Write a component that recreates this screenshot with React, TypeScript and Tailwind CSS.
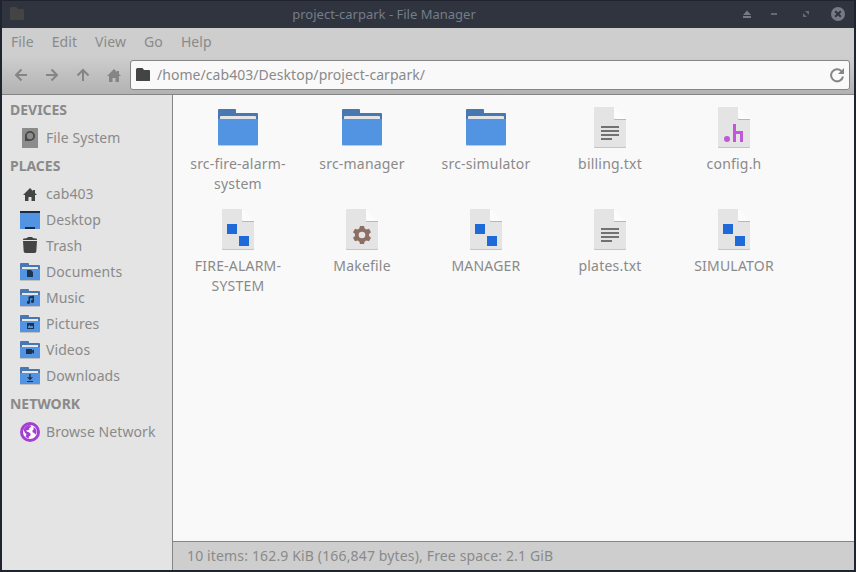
import React from "react";

type SidebarIconName = "disk" | "home" | "desktop" | "trash" | "documents" | "music" | "pictures" | "videos" | "downloads" | "network";
type FileKind = "folder" | "text" | "header" | "make" | "binary";

const HOME = "M7 0L0 7H2V13H5.5V9H8.5V13H12V7H14L12 5V2H10V3Z";
const FOLDER = "M0 1.5Q0 0 1.5 0H6.5L8 2H13Q14 2 14 3V12.5Q14 13 13 13H1Q0 13 0 12.5Z";

function Emblem({ name }: { name: SidebarIconName }) {
  switch (name) {
    case "documents":
      return <path d="M7 7h4l2 2v5H7z" fill="#1b3550" />;
    case "music":
      return <path d="M8.5 7.4L14 6.4v6a1.6 1.6 0 1 1-1.5-1.6V8.900L10 9.400v4a1.6 1.6 0 1 1-1.5-1.6z" fill="#1b3550" />;
    case "pictures":
      return <path fillRule="evenodd" d="M7 8h7v6H7zM8 13h5v-1.5l-1.2-1-1 1L9.500 10 8 11.600z" fill="#1b3550" />;
    case "videos":
      return <path d="M6 8h6v1.500L14 8.500v4.500l-2-1.500V13H6z" fill="#1b3550" />;
    default:
      return <path d="M9.300 7h1.400v3.200H13L10 13.200l-3-3h2.300zM7 14h6v1H7z" fill="#1b3550" />;
  }
}

function SidebarIcon({ name }: { name: SidebarIconName }) {
  return (
    <svg width="20" height="20" viewBox="0 0 20 20" className="shrink-0">
      {name === "disk" && (
        <>
          <rect x="2" y="0" width="16" height="20" rx=".6" fill="#8c8c8c" />
          <path fillRule="evenodd" d="M5 13V8a5 5 0 1 1 5 5zM10 4.8a3.2 3.2 0 1 0 0 6.4 3.2 3.2 0 0 0 0-6.4z" fill="#484848" />
        </>
      )}
      {name === "home" && <path d={HOME} transform="translate(3 4)" fill="#444" />}
      {name === "desktop" && (
        <>
          <path d="M0 1h20v18H0z" fill="#5294e2" />
          <path d="M0 1h20v2H0zM5 17h10v2H5z" fill="#1b2b45" />
        </>
      )}
      {name === "trash" && (
        <path d="M3 3.4Q3 2.5 4 2.4L7.5 2V1h5v1l3.5.4q1 .1 1 1V4H3zM3 5h14l-.7 10.500Q16 17 14 17H6q-2 0-2.300-1.500z" fill="#444" />
      )}
      {["documents", "music", "pictures", "videos", "downloads"].includes(name) && (
        <>
          <path d="M0 2q0-1 1-1h7q1 0 1 1v1h10q1 0 1 1v4H0z" fill="#4877b1" />
          <path d="M2 5h16v3H2z" fill="#e8e8e8" />
          <rect y="7" width="20" height="12" rx=".8" fill="#c0c0c0" />
          <path d="M0 7h20v10.5q0 .5-.7.5H.7q-.7 0-.7-.5z" fill="#5294e2" />
          <g transform="translate(0 1)"><Emblem name={name} /></g>
        </>
      )}
      {name === "network" && (
        <>
          <circle cx="10" cy="10" r="10" fill="#a33fd1" />
          <circle cx="10" cy="10" r="7" fill="#fff" />
          <path d="M8.500 3l2.500.5-.3 1.700-1.700 1 .5 1.300-1.700.8-1.300-.2.2 1.400 2.300.8 1.800 1.700-.5 1.700-1.500 1 .2 1.800Q7 16 5.500 14.500L6.500 12.500 4.500 10 3.500 7.500Q5 4 8.500 3zM13.500 5l1.700 1.200q1.500 1.800 1.300 4.200l-1.200 2.400-1-1.800-1.500-.5-.5-1.800 1.300-1.200z" fill="#a33fd1" />
        </>
      )}
    </svg>
  );
}

function FileIcon({ kind }: { kind: FileKind }) {
  if (kind === "folder") {
    return (
      <svg width="48" height="48" viewBox="0 0 48 48">
        <path d="M4 6q0-1 1-1h16q1 0 1 1v3h21q1 0 1 1v8H4z" fill="#4877b1" />
        <path d="M6 16v-3q0-1 1-1h34q1 0 1 1v3z" fill="#e4e4e4" />
        <path d="M4 20h40v21q0 1-1 1H5q-1 0-1-1z" fill="#c4c8cf" />
        <path d="M4 15.500q0-.5 1-.5h38q1 0 1 .5v24.700q0 .8-1 .8H5q-1 0-1-.8z" fill="#5294e2" />
      </svg>
    );
  }
  return (
    <svg width="48" height="48" viewBox="0 0 48 48">
      <path d="M8 40h32v3q0 1-1 1H9q-1 0-1-1z" fill="#c4c4c4" />
      <path d="M8 4q0-1 1-1h19v12h12v27q0 1-1 1H9q-1 0-1-1z" fill="#e4e4e4" />
      <path d="M28 3l12 12H29q-1 0-1-1z" fill="#fcfcfc" />
      <path d="M28 14q0 1 1 1h11v1H29q-1 0-1-1z" fill="#b7b7b7" />
      {kind === "text" && <path d="M15 22h18v2H15zM15 26h18v2H15zM15 30h18v2H15zM15 34h11v2H15z" fill="#727272" />}
      {kind === "binary" && <path d="M13 18h10v10H13zM25 30h10v10H25z" fill="#1e6ad9" />}
      {kind === "header" && (
        <>
          <circle cx="17" cy="35" r="3" fill="#c355d9" />
          <path d="M23 20h3v7h7v11h-3v-8h-4v8h-3z" fill="#c355d9" />
        </>
      )}
      {kind === "make" && (
        <g transform="translate(24 29)">
          <path d="M-2-9h4l.7 2.6 1.7 1 2.6-.8 2 3.5-2 1.8v1.9l2 1.8-2 3.5-2.6-.8-1.7 1L2 9h-4l-.7-2.5-1.7-1-2.6.8-2-3.5 2-1.8v-1.9l-2-1.8 2-3.5 2.6.8 1.7-1z" fill="#8d6e63" />
          <circle r="3.3" fill="#e4e4e4" />
        </g>
      )}
    </svg>
  );
}

const groups: { title: string; items: [string, SidebarIconName][] }[] = [
  { title: "DEVICES", items: [["File System", "disk"]] },
  {
    title: "PLACES",
    items: [
      ["cab403", "home"], ["Desktop", "desktop"], ["Trash", "trash"], ["Documents", "documents"],
      ["Music", "music"], ["Pictures", "pictures"], ["Videos", "videos"], ["Downloads", "downloads"],
    ],
  },
  { title: "NETWORK", items: [["Browse Network", "network"]] },
];

const files: { lines: string[]; kind: FileKind }[] = [
  { lines: ["src-fire-alarm-", "system"], kind: "folder" },
  { lines: ["src-manager"], kind: "folder" },
  { lines: ["src-simulator"], kind: "folder" },
  { lines: ["billing.txt"], kind: "text" },
  { lines: ["config.h"], kind: "header" },
  { lines: ["FIRE-ALARM-", "SYSTEM"], kind: "binary" },
  { lines: ["Makefile"], kind: "make" },
  { lines: ["MANAGER"], kind: "binary" },
  { lines: ["plates.txt"], kind: "text" },
  { lines: ["SIMULATOR"], kind: "binary" },
];

function TitleBar() {
  return (
    <header className="flex h-7 shrink-0 items-center border-t border-[#20232d] bg-[#2f343f]">
      <svg width="14" height="13" viewBox="0 0 14 13" className="mb-[2px] ml-2 shrink-0"><path d={FOLDER} fill="#444" /></svg>
      <h1 className="flex-1 pb-[2px] pl-[80px] text-center text-[13px] leading-5 text-[#757d8a]">project-carpark - File Manager</h1>
      <div className="flex w-[190px] shrink-0 justify-end pr-[7px]">
        <svg width="104" height="15" viewBox="0 0 104 15">
          <path d="M0 8L4 3.5 8 8zM0 9h8v2H0z" fill="#757a84" />
          <path d="M28 6h6v2h-6z" fill="#656a74" />
          <path d="M62 4h4v4zM60 6l4 4h-4z" fill="#656a74" />
          <circle cx="95" cy="7" r="7" fill="#757a84" />
          <path d="M92.2 4.2l5.6 5.6M97.8 4.2l-5.6 5.6" stroke="#2f343f" strokeWidth="2" />
        </svg>
      </div>
    </header>
  );
}

function Toolbar() {
  return (
    <div className="flex h-[39px] shrink-0 items-center border-b border-[#858585] bg-linear-to-b from-[#cecece] to-[#b2b2b2] pr-1">
      <svg width="128" height="38" viewBox="0 0 128 38" className="shrink-0">
        <g fill="none" stroke="#858585" strokeWidth="2">
          <path d="M25 19H14.5M19.5 13.5L14 19l5.5 5.5" />
          <path d="M44 19h10.5M49.5 13.5L55 19l-5.5 5.5" />
          <path d="M81 25V14.5M75.5 19.5L81 14l5.500 5.500" />
        </g>
        <path d={HOME} transform="translate(105 13)" fill="#858585" />
      </svg>
      <div className="flex h-[30px] flex-1 items-center rounded-[3px] border border-[#858585] bg-[#f9f9f9] pl-[5px] pr-[4px]">
        <svg width="14" height="13" viewBox="0 0 14 13" className="mb-px"><path d={FOLDER} fill="#444" /></svg>
        <span className="ml-[7px] flex-1 text-[14px] leading-5 tracking-[0.05px]">/home/cab403/Desktop/project-carpark/</span>
        <svg width="16" height="16" viewBox="0 0 16 16">
          <path d="M12.300 4A6 6 0 1 0 14 9.500" fill="none" stroke="#858585" strokeWidth="2" />
          <path d="M15 1v6H9z" fill="#858585" />
        </svg>
      </div>
    </div>
  );
}

export default function App() {
  return (
    <div className="flex h-[572px] w-[856px] flex-col overflow-hidden border-x-2 border-b-2 border-[#20242e] bg-[#cecece] font-['Noto_Sans',sans-serif] text-[14px] leading-5 text-[#8a8a8a]">
      <TitleBar />
      <nav className="flex h-7 shrink-0 items-center gap-[18px] px-[9px] tracking-[0.08px]">
        {["File", "Edit", "View", "Go", "Help"].map((m) => <span key={m}>{m}</span>)}
      </nav>
      <Toolbar />
      <div className="flex min-h-0 flex-1">
        <aside className="w-[171px] shrink-0 border-r border-[#858585] bg-[#e4e4e4] tracking-[0.08px]">
          {groups.map((g) => (
            <section key={g.title}>
              <h2 className="flex h-[30px] items-center pl-2 text-[14px] font-bold tracking-[-0.02px]">{g.title}</h2>
              {g.items.map(([label, icon]) => (
                <div key={label} className="flex h-[26px] items-center gap-[6px] pl-[18px] whitespace-nowrap">
                  <SidebarIcon name={icon} />
                  <span>{label}</span>
                </div>
              ))}
            </section>
          ))}
        </aside>
        <div className="flex min-w-0 flex-1 flex-col">
          <main className="flex-1 bg-[#f9f9f9] pl-[3px] pt-[9px]">
            <div className="grid auto-rows-[102px] grid-cols-[repeat(5,124px)]">
              {files.map((f) => (
                <div key={f.lines[0]} className="flex flex-col items-center gap-[2px]">
                  <FileIcon kind={f.kind} />
                  <div className="text-center tracking-[0.2px]">
                    {f.lines.map((l) => <div key={l}>{l}</div>)}
                  </div>
                </div>
              ))}
            </div>
          </main>
          <footer className="flex h-[29px] shrink-0 items-center border-t border-[#858585] pl-[14px] tracking-[0.15px]">
            10 items: 162.9 KiB (166,847 bytes), Free space: 2.1 GiB
          </footer>
        </div>
      </div>
    </div>
  );
}
